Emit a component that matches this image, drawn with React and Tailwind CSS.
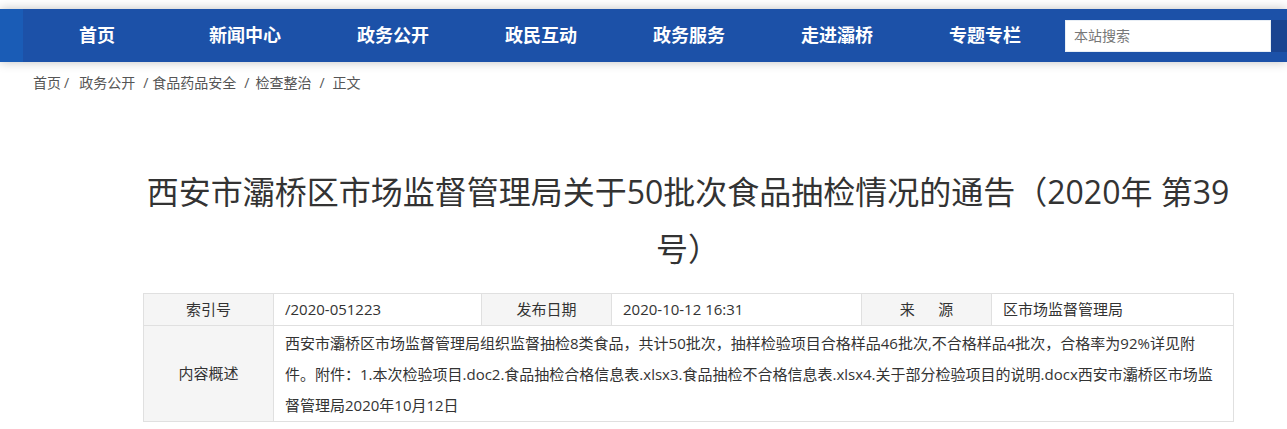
import React from "react";

const font = { fontFamily: '"Open Sans", "Noto Sans CJK SC", sans-serif' };

const navItems = ["首页", "新闻中心", "政务公开", "政民互动", "政务服务", "走进灞桥", "专题专栏"];

export default function App() {
  return (
    <div className="w-[1287px] h-[429px] bg-white overflow-hidden text-[#333]" style={font}>
      <div className="h-[9px] bg-white" />
      <header className="h-[53px] flex bg-[#1c51a8] shadow-[0_0_10px_rgba(0,0,0,0.25)] relative z-10 overflow-hidden">
        <div className="w-[23px] shrink-0 bg-[#1a5cb6]" />
        <nav className="flex shrink-0">
          {navItems.map((n) => (
            <div key={n} className="w-[148px] shrink-0 flex items-center justify-center text-white font-bold text-[18px]">
              {n}
            </div>
          ))}
        </nav>
        <div className="ml-[6px] flex items-center shrink-0">
          <div className="w-[206px] h-[32px] shrink-0 bg-white border border-[#e8eef5] flex items-center pl-[8px] text-[14px] text-[#777]">
            本站搜索
          </div>
          <div className="w-[30px] h-[32px] shrink-0 bg-[#1a4490]" />
        </div>
      </header>
      <div className="pl-[33px] pt-[12px] flex items-center text-[14px] text-[#555] leading-[18px]">
        <span>首页</span>
        <span className="ml-[3px]">/</span>
        <span className="ml-[10px]">政务公开</span>
        <span className="ml-[8px]">/</span>
        <span className="ml-[4px]">食品药品安全</span>
        <span className="ml-[8px]">/</span>
        <span className="ml-[6px]">检查整治</span>
        <span className="ml-[8px]">/</span>
        <span className="ml-[8px]">正文</span>
      </div>
      <div className="ml-[143px] w-[1090px]">
        <h1 className="mt-[71px] text-center text-[32px] leading-[57px] text-[#333] font-normal whitespace-nowrap">
          西安市灞桥区市场监督管理局关于50批次食品抽检情况的通告（2020年 第39
          <br />
          号）
        </h1>
        <table className="mt-[16px] w-[1090px] border-collapse text-[15px] text-[#333] table-fixed">
          <colgroup>
            <col className="w-[130px]" />
            <col className="w-[208px]" />
            <col className="w-[130px]" />
            <col className="w-[250px]" />
            <col className="w-[130px]" />
            <col className="w-[242px]" />
          </colgroup>
          <tbody>
            <tr className="h-[32px]">
              <td className="border border-[#e0e0e0] bg-[#f5f5f5] text-center p-0">索引号</td>
              <td className="border border-[#e0e0e0] pl-[11px] p-0">/2020-051223</td>
              <td className="border border-[#e0e0e0] bg-[#f5f5f5] text-center p-0">发布日期</td>
              <td className="border border-[#e0e0e0] pl-[11px] p-0">2020-10-12 16:31</td>
              <td className="border border-[#e0e0e0] bg-[#f5f5f5] text-center whitespace-pre p-0">来      源</td>
              <td className="border border-[#e0e0e0] pl-[11px] p-0">区市场监督管理局</td>
            </tr>
            <tr className="h-[95px]">
              <td className="border border-[#e0e0e0] bg-[#f5f5f5] text-center p-0">内容概述</td>
              <td colSpan={5} className="border border-[#e0e0e0] pl-[11px] pt-[2px] pb-0 leading-[31px] align-top whitespace-nowrap">
                西安市灞桥区市场监督管理局组织监督抽检8类食品，共计50批次，抽样检验项目合格样品46批次,不合格样品4批次，合格率为92%详见附
                <br />
                件。附件：1.本次检验项目.doc2.食品抽检合格信息表.xlsx3.食品抽检不合格信息表.xlsx4.关于部分检验项目的说明.docx西安市灞桥区市场监
                <br />
                督管理局2020年10月12日
              </td>
            </tr>
          </tbody>
        </table>
      </div>
    </div>
  );
}
